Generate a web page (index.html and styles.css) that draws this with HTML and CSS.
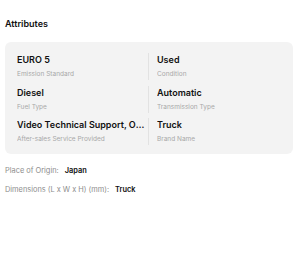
FILE: index.html
```html
<!DOCTYPE html>
<html>
<head>
<meta charset="utf-8">
<link rel="stylesheet" href="styles.css">
</head>
<body>
<div class="page">
  <h2 class="title">Attributes</h2>
  <div class="card">
    <div class="row">
      <div class="cell">
        <div class="value">EURO 5</div>
        <div class="label">Emission Standard</div>
      </div>
      <div class="cell right">
        <div class="value">Used</div>
        <div class="label">Condition</div>
      </div>
    </div>
    <div class="row">
      <div class="cell">
        <div class="value">Diesel</div>
        <div class="label">Fuel Type</div>
      </div>
      <div class="cell right">
        <div class="value">Automatic</div>
        <div class="label">Transmission Type</div>
      </div>
    </div>
    <div class="row">
      <div class="cell">
        <div class="value">Video Technical Support, Online Support</div>
        <div class="label">After-sales Service Provided</div>
      </div>
      <div class="cell right">
        <div class="value">Truck</div>
        <div class="label">Brand Name</div>
      </div>
    </div>
  </div>
  <div class="extra">
    <div class="line"><span class="k">Place of Origin:</span><span class="v">Japan</span></div>
    <div class="line"><span class="k">Dimensions (L x W x H) (mm):</span><span class="v">Truck</span></div>
  </div>
</div>
</body>
</html>
```
FILE: styles.css
```css
html, body {
  margin: 0;
  padding: 0;
  background: #ffffff;
}
* {
  box-sizing: border-box;
}
body {
  font-family: Inter, "Noto Sans", sans-serif;
  color: #111111;
}
.page {
  padding: 17px 7px 0 5px;
}
.title {
  margin: 0;
  font-size: 9px;
  font-weight: 600;
  line-height: 14px;
}
.card {
  margin-top: 11px;
  background: #f3f3f3;
  border-radius: 6px;
  padding: 11px 0 9px 12px;
  display: flex;
  flex-direction: column;
  gap: 5.5px;
}
.row {
  display: flex;
}
.cell {
  flex: 0 0 132px;
  min-width: 0;
  padding-right: 1px;
  display: flex;
  flex-direction: column;
  gap: 2px;
  border-right: 1px solid #e2e2e2;
}
.cell.right {
  flex: 1 1 auto;
  border-right: none;
  padding-left: 8px;
}
.value {
  font-size: 9px;
  font-weight: 600;
  line-height: 14px;
  white-space: nowrap;
  overflow: hidden;
  text-overflow: ellipsis;
}
.label {
  font-size: 6.5px;
  line-height: 11px;
  color: #a8a8a8;
  white-space: nowrap;
  overflow: hidden;
  text-overflow: ellipsis;
}
.extra {
  margin-top: 10px;
  display: flex;
  flex-direction: column;
  gap: 5px;
}
.line {
  font-size: 7.4px;
  line-height: 14px;
  display: flex;
  gap: 6px;
}
.line .k {
  color: #8d8d8d;
}
.line .v {
  color: #111111;
  font-weight: 600;
}
```
